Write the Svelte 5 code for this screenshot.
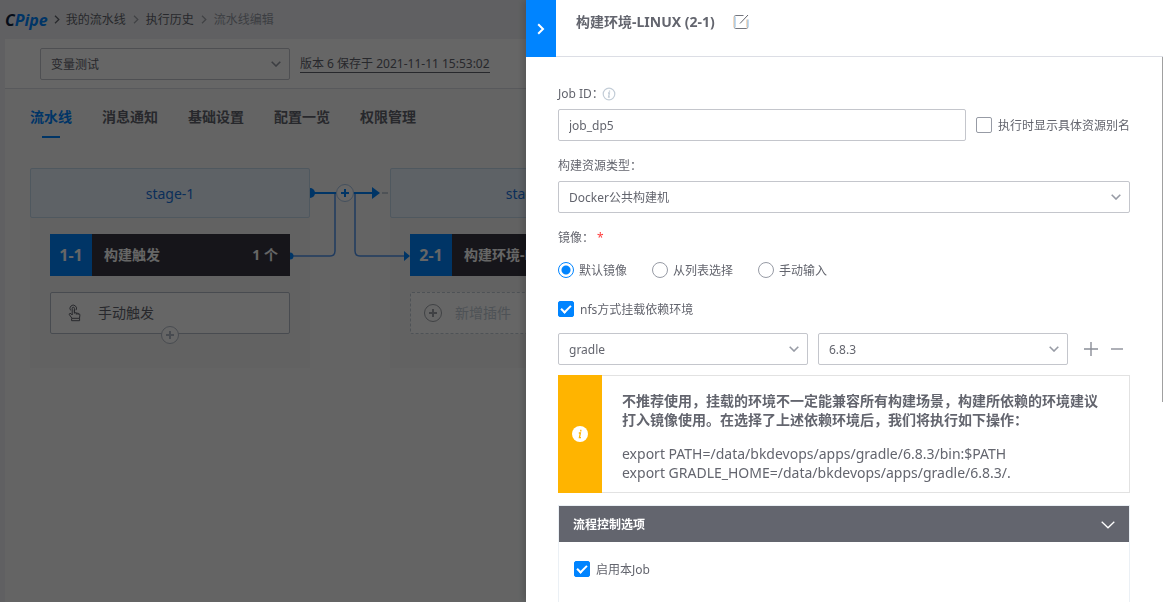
<script>
  let collapsed = $state(false);
  let pipeline = $state("变量测试");
  let jobId = $state("job_dp5");
  let showAlias = $state(false);
  let buildType = $state("Docker公共构建机");
  let imageSource = $state("default");
  let useNfs = $state(true);
  let envApp = $state("gradle");
  let envVersion = $state("6.8.3");
  let enableJob = $state(true);

  const tabs = ["流水线", "消息通知", "基础设置", "配置一览", "权限管理"];
  const imageSources = [
    { id: "default", name: "默认镜像" },
    { id: "list", name: "从列表选择" },
    { id: "manual", name: "手动输入" },
  ];
</script>

{#snippet chevron()}
  <svg class="chevron" width="10" height="6" viewBox="0 0 10 6" aria-hidden="true">
    <path d="M0.7 0.7L5 5L9.3 0.7" fill="none" stroke="currentColor" stroke-width="1.6" />
  </svg>
{/snippet}

{#snippet crumbArrow()}
  <svg width="6" height="9" viewBox="0 0 6 9" aria-hidden="true">
    <path d="M1 0.8L4.8 4.5L1 8.2" fill="none" stroke="currentColor" stroke-width="1.3" />
  </svg>
{/snippet}

{#snippet plusCircle()}
  <svg width="20" height="20" viewBox="0 0 20 20" aria-hidden="true">
    <circle cx="10" cy="10" r="8.5" fill="#fff" stroke="currentColor" />
    <path d="M10 6v8M6 10h8" stroke="currentColor" stroke-width="2" />
  </svg>
{/snippet}

<div class="page">
  <header class="crumbs">
    <a class="logo" href="#home"><span>C</span>Pipe</a>
    <i class="first">{@render crumbArrow()}</i>
    <a href="#list">我的流水线</a>
    <i>{@render crumbArrow()}</i>
    <a href="#history">执行历史</a>
    <i>{@render crumbArrow()}</i>
    <span class="current">流水线编辑</span>
  </header>

  <main>
    <div class="toolbar">
      <div class="select pipeline-select">
        <select bind:value={pipeline} aria-label="流水线">
          <option>变量测试</option>
        </select>
        {@render chevron()}
      </div>
      <a class="version" href="#version">版本 6 保存于 2021-11-11 15:53:02</a>
    </div>

    <nav class="tabs">
      {#each tabs as tab, i}
        <a href="#tab{i}" class:active={i === 0}>{tab}</a>
      {/each}
    </nav>

    <div class="stages">
      <section class="stage">
        <h3>stage-1</h3>
        <div class="job">
          <div class="job-head">
            <span class="job-no">1-1</span>
            <span class="job-name">构建触发</span>
            <span class="job-count">1 个</span>
          </div>
          <div class="atom">
            <svg class="hand" width="14" height="18" viewBox="0 0 14 18" fill="none" stroke="currentColor" aria-hidden="true">
              <path d="M2.6 6.4A3.3 3.3 0 1 1 8 6.2" />
              <path d="M4.2 11V4.3a1.1 1.1 0 0 1 2.2 0v4.2l4.3 1q1.3.4 1.2 1.6l-.4 3.2H4L1.3 10.6q-.3-1 .7-1.2t2.2 1.6M6.4 6v3.6M8.3 9v1.6M10.1 9.4v1.6M3.6 14.3v2.4h8v-2.4" />
            </svg>
            <span>手动触发</span>
          </div>
          <button class="add-atom" aria-label="添加插件">{@render plusCircle()}</button>
        </div>
      </section>

      <svg class="links" width="80" height="110" viewBox="0 0 80 110" aria-hidden="true">
        <path d="M0 20a5 5 0 0 1 0 10z" fill="#0084ff" />
        <path d="M0 25h26M43 25h20" stroke="#0084ff" stroke-width="2" />
        <path d="M62 19l8 6-8 6z" fill="#0084ff" />
        <path d="M72 25h6" stroke="#c3cdd7" stroke-width="2" />
        <path d="M-20 88h40q5 0 5-5V26M45 26v57q0 5 5 5h44" fill="none" stroke="#4f93ec" stroke-width="1.5" />
        <path d="M-20 84.5a3.5 3.5 0 0 1 0 7zM94 83l6 5-6 5z" fill="#0084ff" />
        <circle cx="35" cy="25" r="8.5" fill="#fff" stroke="#a9c6e8" />
        <path d="M35 21v8M31 25h8" stroke="#0084ff" stroke-width="2" />
      </svg>

      <section class="stage">
        <h3>stage-2</h3>
        <div class="job">
          <div class="job-head">
            <span class="job-no">2-1</span>
            <span class="job-name">构建环境-LINUX</span>
          </div>
          <button class="atom empty">
            {@render plusCircle()}
            <span>新增插件</span>
          </button>
        </div>
      </section>
    </div>
  </main>
</div>

<div class="mask"></div>

<aside class="drawer">
  <header class="drawer-head">
    <button class="close" aria-label="收起">
      <svg width="8" height="12" viewBox="0 0 8 12" aria-hidden="true">
        <path d="M1.2 1.2L6 6L1.2 10.8" fill="none" stroke="#fff" stroke-width="2" />
      </svg>
    </button>
    <h2>构建环境-LINUX (2-1)</h2>
    <button class="edit" aria-label="编辑">
      <svg width="16" height="16" viewBox="0 0 16 16" fill="none" aria-hidden="true">
        <path d="M10.5 1.5H2.5a1 1 0 0 0-1 1M1.5 13.5a1 1 0 0 0 1 1h11a1 1 0 0 0 1-1" stroke="#74767e" />
        <path d="M7 9.5L15 1" stroke="#63656e" />
        <path d="M1 2.5v11M14 5.5v8" stroke="#f0b67c" />
        <path d="M2 2.5v11M15 5.5v8" stroke="#7fb9ec" />
      </svg>
    </button>
  </header>

  <form class="drawer-body">
    <div class="label">
      <label for="job-id">Job ID：</label>
      <svg class="info" width="14" height="14" viewBox="0 0 14 14" aria-hidden="true">
        <circle cx="7" cy="7" r="5.8" fill="none" stroke="#c3cdd7" stroke-width="1.2" />
        <path d="M6 6h1.4L6.6 10H7.8M7.5 3.6v1.2" fill="none" stroke="#c3cdd7" stroke-width="1.3" />
      </svg>
    </div>
    <div class="row">
      <input id="job-id" class="text" type="text" bind:value={jobId} />
      <label class="check">
        <input type="checkbox" bind:checked={showAlias} />
        <span>执行时显示具体资源别名</span>
      </label>
    </div>

    <div class="label next"><label for="build-type">构建资源类型：</label></div>
    <div class="select">
      <select id="build-type" bind:value={buildType}>
        <option>Docker公共构建机</option>
      </select>
      {@render chevron()}
    </div>

    <div class="label next" id="image-label">镜像：<span class="required">*</span></div>
    <div class="radios" role="radiogroup" aria-labelledby="image-label">
      {#each imageSources as source}
        <label class="check">
          <input type="radio" name="image" value={source.id} bind:group={imageSource} />
          <span>{source.name}</span>
        </label>
      {/each}
    </div>

    <label class="check nfs">
      <input type="checkbox" bind:checked={useNfs} />
      <span>nfs方式挂载依赖环境</span>
    </label>

    <div class="row env">
      <div class="select">
        <select bind:value={envApp} aria-label="依赖">
          <option>gradle</option>
        </select>
        {@render chevron()}
      </div>
      <div class="select">
        <select bind:value={envVersion} aria-label="版本">
          <option>6.8.3</option>
        </select>
        {@render chevron()}
      </div>
      <div class="env-actions">
        <button type="button" aria-label="增加">
          <svg width="14" height="14" viewBox="0 0 14 14"><path d="M7 0v14M0 7h14" stroke="#8b8e98" stroke-width="1.4" /></svg>
        </button>
        <button type="button" aria-label="删除">
          <svg width="12" height="14" viewBox="0 0 12 14"><path d="M0 7h12" stroke="#8b8e98" stroke-width="1.4" /></svg>
        </button>
      </div>
    </div>

    <div class="alert">
      <div class="alert-icon">
        <svg width="16" height="16" viewBox="0 0 16 16" aria-hidden="true">
          <circle cx="8" cy="8" r="8" fill="#fff" />
          <path d="M6.8 7h1.6L7.4 11.6H9M8.8 3.8v1.6" fill="none" stroke="#ffb400" stroke-width="1.3" />
        </svg>
      </div>
      <div class="alert-text">
        <strong>不推荐使用，挂载的环境不一定能兼容所有构建场景，构建所依赖的环境建议打入镜像使用。在选择了上述依赖环境后，我们将执行如下操作：</strong>
        <p>export PATH=/data/bkdevops/apps/gradle/6.8.3/bin:$PATH<br />export GRADLE_HOME=/data/bkdevops/apps/gradle/6.8.3/.</p>
      </div>
    </div>

    <section class="accordion">
      <button type="button" class="accordion-head" onclick={() => (collapsed = !collapsed)}>
        流程控制选项
        <svg width="14" height="8" viewBox="0 0 14 8" aria-hidden="true">
          <path d="M0.7 0.7L7 6.8L13.3 0.7" fill="none" stroke="#fff" stroke-width="1.3" />
        </svg>
      </button>
      {#if !collapsed}
        <div class="accordion-body">
          <label class="check">
            <input type="checkbox" bind:checked={enableJob} />
            <span>启用本Job</span>
          </label>
        </div>
      {/if}
    </section>
  </form>
  <div class="scrollbar"></div>
</aside>

<style>
  :global(body) {
    overflow: hidden;
    color: #63656e;
    font: 12px/16px "Noto Sans", "Noto Sans CJK SC", sans-serif;
  }

  * {
    box-sizing: border-box;
  }

  a {
    color: inherit;
    text-decoration: none;
  }

  button,
  input,
  select {
    margin: 0;
    padding: 0;
    border: 0;
    background: none;
    color: inherit;
    font: inherit;
  }

  svg {
    display: block;
    flex: none;
  }

  h2,
  h3,
  p {
    margin: 0;
  }

  /* pipeline editor */
  .page {
    display: flex;
    flex-direction: column;
    height: 100vh;
    background: #f0f1f5;
    overflow: hidden;
  }

  .crumbs {
    display: flex;
    align-items: center;
    height: 39px;
    padding: 0 5px;
    white-space: nowrap;
  }

  .crumbs i {
    margin: 0 7px;
    color: #a3a6ad;
  }

  .crumbs .first {
    margin: 0 6px;
    color: #63656e;
  }

  .crumbs .current {
    color: #979ba5;
  }

  .logo {
    color: #0084ff;
    font: italic 700 16px/20px "Open Sans", sans-serif;
  }

  .logo span {
    color: #10233f;
  }

  main {
    flex: 1;
    margin-left: 5px;
    background: #fafbfb;
  }

  .toolbar {
    display: flex;
    align-items: center;
    gap: 10px;
    padding: 9px 35px 8px;
    border-bottom: 1px solid #dcdee5;
    background: #fff;
  }

  .pipeline-select {
    width: 250px;
  }

  .version {
    border-bottom: 1px solid #63656e;
    white-space: nowrap;
  }

  .tabs {
    display: flex;
    gap: 30px;
    padding-left: 25px;
    font-size: 14px;
    font-weight: 700;
    line-height: 56px;
    white-space: nowrap;
  }

  .tabs a {
    position: relative;
  }

  .tabs .active {
    color: #0084ff;
  }

  .tabs .active::after {
    content: "";
    position: absolute;
    bottom: 7px;
    left: 50%;
    width: 18px;
    height: 2px;
    margin-left: -9px;
    background: #0084ff;
  }

  .stages {
    display: flex;
    align-items: flex-start;
    padding: 23px 25px;
  }

  .stage {
    flex: none;
    width: 280px;
    height: 200px;
    background: #f5f5f5;
  }

  .stage h3 {
    padding-top: 2px;
    border: 1px solid #c6dcee;
    border-radius: 2px;
    background: #ebf4ff;
    color: #1a75e0;
    font-size: 14px;
    font-weight: 400;
    line-height: 46px;
    text-align: center;
  }

  .links {
    position: relative;
    overflow: visible;
  }

  .job {
    position: relative;
    padding: 16px 20px;
    font-size: 14px;
  }

  .job-head {
    display: flex;
    align-items: center;
    height: 42px;
    background: #373541;
    color: #fff;
    font-weight: 700;
    white-space: nowrap;
  }

  .job-no {
    width: 42px;
    background: #0084ff;
    font-size: 16px;
    line-height: 42px;
    text-align: center;
  }

  .job-name {
    flex: 1;
    padding-left: 12px;
  }

  .job-count {
    padding-right: 12px;
  }

  .atom {
    display: flex;
    align-items: center;
    gap: 16px;
    width: 100%;
    height: 42px;
    margin-top: 16px;
    padding-left: 17px;
    border: 1px solid #b4bcc8;
    border-radius: 2px;
    background: #fff;
  }

  .atom.empty {
    gap: 12px;
    padding-left: 12px;
    border: 1px dashed #c3cdd7;
    color: #c3cdd7;
  }

  .empty svg {
    color: #a0a4ab;
  }

  .add-atom {
    position: absolute;
    bottom: 5px;
    left: 50%;
    margin-left: -10px;
    color: #b4bcc8;
  }

  .mask {
    position: fixed;
    inset: 0;
    background: rgba(0, 0, 0, 0.6);
  }

  /* job property drawer */
  .drawer {
    position: fixed;
    top: 0;
    right: 0;
    bottom: 0;
    width: 637px;
    max-width: 100%;
    background: #fff;
    box-shadow: -2px 0 8px rgba(0, 0, 0, 0.2);
    overflow: hidden;
  }

  .drawer-head {
    display: flex;
    align-items: flex-start;
    height: 57px;
    border-bottom: 1px solid #dcdee5;
  }

  .close {
    display: flex;
    align-items: center;
    justify-content: center;
    width: 30px;
    height: 57px;
    background: #0084ff;
  }

  .drawer-head h2 {
    margin: 12px 18px 0 20px;
    font-size: 14px;
    line-height: 20px;
  }

  .edit {
    margin-top: 14px;
  }

  .drawer-body {
    padding: 20px 33px 0 32px;
  }

  .label {
    display: flex;
    align-items: center;
    height: 32px;
    padding-top: 2px;
  }

  .next {
    margin-top: 8px;
  }

  .label .info {
    margin-left: -2px;
  }

  .required {
    margin-left: 3px;
    color: #ff3b3b;
  }

  .row {
    display: flex;
    align-items: center;
    gap: 10px;
  }

  .text {
    flex: 1;
    min-width: 0;
    height: 32px;
    padding: 0 10px;
    border: 1px solid #c4c6cc;
    border-radius: 2px;
    background: #fff;
  }

  .select {
    position: relative;
  }

  .select select {
    display: block;
    width: 100%;
    height: 32px;
    padding: 2px 30px 0 10px;
    border: 1px solid #c4c6cc;
    border-radius: 2px;
    background: #fff;
    appearance: none;
  }

  .select :global(.chevron) {
    position: absolute;
    top: 13px;
    right: 9px;
    color: #979ba5;
    pointer-events: none;
  }

  .check {
    display: flex;
    align-items: center;
    gap: 5px;
    white-space: nowrap;
  }

  .check span {
    padding-top: 2px;
  }

  .check input {
    flex: none;
    width: 16px;
    height: 16px;
    border: 1px solid #979ba5;
    background: #fff;
    appearance: none;
  }

  .check input[type="checkbox"] {
    margin-right: 1px;
    border-radius: 2px;
  }

  .check input[type="checkbox"]:checked {
    display: flex;
    align-items: flex-start;
    justify-content: center;
    padding-top: 1px;
    border-color: #0084ff;
    background: #0084ff;
  }

  .check input[type="checkbox"]:checked::after {
    content: "";
    box-sizing: border-box;
    width: 6px;
    height: 10px;
    border: solid #fff;
    border-width: 0 2px 2px 0;
    transform: rotate(45deg);
  }

  .check input[type="radio"] {
    border-radius: 50%;
  }

  .check input[type="radio"]:checked {
    border-color: #0084ff;
    background: radial-gradient(circle, #0084ff 4px, #fff 5px);
  }

  .radios {
    display: flex;
    align-items: center;
    gap: 25px;
    height: 34px;
  }

  .nfs {
    height: 32px;
    margin: 6px 0 8px;
  }

  .env .select {
    flex: 1;
  }

  .env-actions {
    display: flex;
    gap: 13px;
    padding: 0 7px 0 6px;
  }

  .alert {
    display: flex;
    margin-top: 10px;
    border: 1px solid #e2e2e2;
    border-left: 0;
  }

  .alert-icon {
    display: flex;
    flex: none;
    align-items: center;
    justify-content: center;
    width: 44px;
    margin: -1px 0;
    background: #ffb400;
  }

  .alert-text {
    padding: 15px 20px 10px;
    font-size: 14px;
    line-height: 19px;
  }

  .alert-text p {
    margin-top: 15px;
  }

  .accordion {
    min-height: 200px;
    margin-top: 12px;
    border: 1px solid #ebf0f5;
  }

  .accordion-head {
    display: flex;
    align-items: center;
    justify-content: space-between;
    width: 100%;
    height: 36px;
    padding: 1px 14px 0;
    background: #63656e;
    color: #fff;
    font-weight: 700;
  }

  .accordion-body {
    padding: 18px 15px;
  }

  .scrollbar {
    position: absolute;
    top: 57px;
    right: 0;
    width: 1px;
    height: 345px;
    background: #a0a0a0;
  }
</style>
